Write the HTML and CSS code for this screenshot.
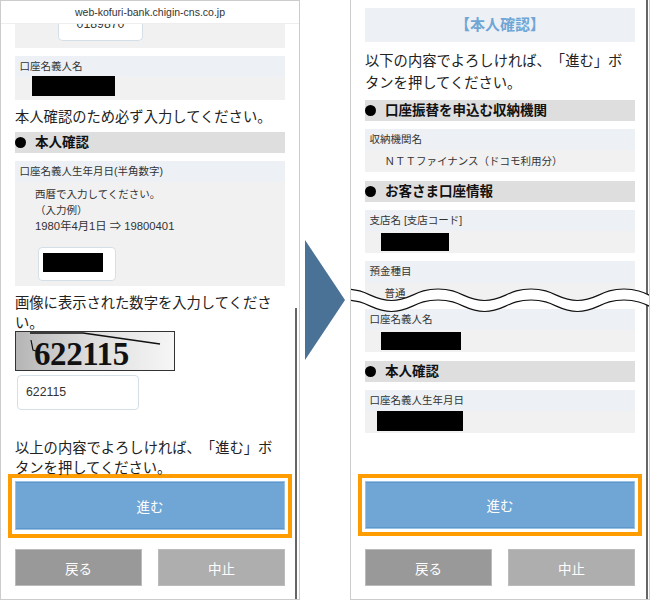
FILE: index.html
```html
<!DOCTYPE html>
<html lang="ja">
<head>
<meta charset="utf-8">
<title>本人確認</title>
<link rel="stylesheet" href="styles.css">
</head>
<body>
<main class="page">
  <section class="phone phone-left">
    <header class="addr">web-kofuri-bank.chigin-cns.co.jp</header>
    <div class="card clip-card">
      <div class="input clip-input">0189870</div>
    </div>
    <div class="card">
      <div class="card-label">口座名義人名</div>
      <div class="card-value left-name"><div class="mask mask-name"></div></div>
    </div>
    <p class="lead lead-notice">本人確認のため必ず入力してください。</p>
    <h2 class="heading">本人確認</h2>
    <div class="card card-birth">
      <div class="card-label">口座名義人生年月日(半角数字)</div>
      <div class="hint">西暦で入力してください。<br>（入力例）<br><span class="hint-example">1980年4月1日 ⇒ 19800401</span></div>
      <div class="input birth-input"><div class="mask mask-birth"></div></div>
    </div>
    <p class="lead lead-captcha">画像に表示された数字を入力してください。</p>
    <div class="captcha">
      <svg class="captcha-lines" viewBox="0 0 160 40" aria-hidden="true">
        <path d="M15 2 L68 2 L145 13" class="captcha-stroke"/>
        <path d="M16 9 L18 19 L24 21" class="captcha-stroke thin"/>
      </svg>
      <span class="captcha-text">622115</span>
    </div>
    <div class="input captcha-input">622115</div>
    <p class="lead lead-confirm">以上の内容でよろしければ、「進む」ボタンを押してください。</p>
    <div class="highlight highlight-left"><button class="btn btn-next">進む</button></div>
    <div class="btn-row">
      <button class="btn btn-back">戻る</button>
      <button class="btn btn-stop">中止</button>
    </div>
    <div class="scrollbar scrollbar-left"></div>
  </section>

  <div class="arrow-col">
    <svg class="arrow" viewBox="0 0 40 120" aria-hidden="true"><polygon points="0,0 40,60 0,120" class="arrow-fill"/></svg>
  </div>

  <section class="phone phone-right">
    <h1 class="title">【本人確認】</h1>
    <p class="lead lead-top">以下の内容でよろしければ、「進む」ボタンを押してください。</p>
    <h2 class="heading">口座振替を申込む収納機関</h2>
    <div class="card">
      <div class="card-label">収納機関名</div>
      <div class="card-value value-text">ＮＴＴファイナンス（ドコモ利用分）</div>
    </div>
    <h2 class="heading">お客さま口座情報</h2>
    <div class="card">
      <div class="card-label">支店名 [支店コード]</div>
      <div class="card-value"><div class="mask mask-branch"></div></div>
    </div>
    <div class="card card-break">
      <div class="card-label label-tall">預金種目</div>
      <div class="card-value value-text value-cut">普通</div>
    </div>
    <div class="card">
      <div class="card-label">口座名義人名</div>
      <div class="card-value"><div class="mask mask-holder"></div></div>
    </div>
    <h2 class="heading">本人確認</h2>
    <div class="card">
      <div class="card-label">口座名義人生年月日</div>
      <div class="card-value"><div class="mask mask-dob"></div></div>
    </div>
    <div class="highlight highlight-right"><button class="btn btn-next">進む</button></div>
    <div class="btn-row">
      <button class="btn btn-back">戻る</button>
      <button class="btn btn-stop">中止</button>
    </div>
    <div class="scrollbar scrollbar-right"></div>
    <svg class="wave" viewBox="0 0 300 40" aria-hidden="true">
      <path class="wave-fill" d="M-5 7 C18 7 22 18.500 41.500 18.500 C61 18.500 65 7 88 7 C111 7 115 18.500 134.500 18.500 C154 18.500 158 7 181 7 C204 7 208 18.500 227.500 18.500 C247 18.500 251 7 274 7 C297 7 301 18.500 320 18.500 L320 29.500 C301 29.500 297 18 274 18 C251 18 247 29.500 227.500 29.500 C208 29.500 204 18 181 18 C158 18 154 29.500 134.500 29.500 C115 29.500 111 18 88 18 C65 18 61 29.500 41.500 29.500 C22 29.500 18 18 -5 18 Z"/>
      <path class="wave-line" d="M-5 7 C18 7 22 18.500 41.500 18.500 C61 18.500 65 7 88 7 C111 7 115 18.500 134.500 18.500 C154 18.500 158 7 181 7 C204 7 208 18.500 227.500 18.500 C247 18.500 251 7 274 7 C297 7 301 18.500 320 18.500"/>
      <path class="wave-line" d="M-5 18 C18 18 22 29.500 41.500 29.500 C61 29.500 65 18 88 18 C111 18 115 29.500 134.500 29.500 C154 29.500 158 18 181 18 C204 18 208 29.500 227.500 29.500 C247 29.500 251 18 274 18 C297 18 301 29.500 320 29.500"/>
    </svg>
  </section>
</main>
</body>
</html>
```

FILE: styles.css
```css
* { box-sizing: border-box; }

html, body { margin: 0; padding: 0; background: #fff; }

body {
  font-family: "Liberation Sans", "Noto Sans CJK JP", sans-serif;
  color: #222;
  text-spacing-trim: space-all;
}

.page {
  display: flex;
  width: 650px;
  height: 600px;
  overflow: hidden;
}

.phone {
  position: relative;
  flex: 0 0 300px;
  height: 600px;
  padding: 0 14px;
  border: 1px solid #ccc;
  overflow: hidden;
}

.phone-right { border-top: 0; }

.arrow-col {
  flex: 0 0 50px;
  display: flex;
  align-items: center;
  padding-left: 5px;
}

.arrow { display: block; width: 40px; height: 120px; }
.arrow-fill { fill: #4a7196; }

.addr {
  height: 23px;
  margin: 0 -14px;
  border-bottom: 1px solid #eee;
  font-size: 10.5px;
  line-height: 22px;
  text-align: center;
  color: #333;
}

.title {
  height: 34px;
  margin: 8px 0 0;
  background: #edf1f5;
  font-size: 15px;
  font-weight: bold;
  line-height: 34px;
  text-align: center;
  color: #6fa6d6;
}

.card {
  margin-bottom: 8px;
  background: #f1f1f1;
}

.card-label {
  height: 21px;
  padding-left: 4.5px;
  background: #edf1f5;
  font-size: 10.5px;
  line-height: 21px;
  color: #333;
}

.label-tall { height: 22px; }

.card-value {
  height: 22px;
  padding-left: 16px;
  padding-top: 2px;
}

.value-text {
  padding-left: 19.5px;
  padding-top: 0;
  font-size: 10.5px;
  line-height: 22px;
  color: #333;
}

.card-break { height: 40px; }
.value-cut { height: 18px; line-height: 20px; }

.left-name { display: flow-root; height: 23px; padding-top: 0; padding-left: 17px; }

.mask { background: #000; }
.mask-name { width: 83px; height: 20px; margin-top: -1px; }
.mask-birth { width: 60px; height: 19px; }
.mask-branch { width: 68px; height: 18px; }
.mask-holder { width: 80px; height: 18px; }
.mask-dob { width: 86px; height: 20px; margin-left: -4px; margin-top: -2px; }

.input {
  background: #fff;
  border: 1px solid #d5dfe8;
  border-radius: 4px;
  font-size: 12.3px;
  color: #333;
}

.clip-card {
  height: 24px;
  margin-bottom: 8px;
  overflow: hidden;
  padding-left: 43px;
}

.clip-input {
  width: 85px;
  height: 17px;
  border-top: 0;
  border-radius: 0 0 5px 5px;
  overflow: hidden;
  text-align: center;
  line-height: 0;
}

.lead {
  margin: 0;
  font-size: 14.3px;
  line-height: 20px;
  color: #222;
}

.lead-notice { margin: -1px 0 5px; }
.lead-captcha { margin-top: 7px; }
.lead-confirm { margin-top: 28px; }
.lead-top { margin: 8px 0 6px; line-height: 22px; }

.heading {
  position: relative;
  height: 21px;
  margin: 0 0 8px;
  padding-left: 20px;
  background: #dedede;
  font-size: 13.5px;
  font-weight: bold;
  line-height: 21px;
  color: #111;
}

.card + .heading { margin-top: 9px; }

.heading::before {
  content: "";
  position: absolute;
  left: 0;
  top: 5px;
  width: 11px;
  height: 11px;
  border-radius: 50%;
  background: #000;
}

.card-birth { height: 125px; margin-bottom: 0; }

.hint {
  padding: 4px 0 0 20px;
  font-size: 10.5px;
  line-height: 16px;
  color: #333;
}

.hint-example { font-size: 11.3px; }

.birth-input {
  width: 78px;
  height: 34px;
  margin: 13px 0 0 23px;
  padding: 5px 0 0 4px;
}

.captcha {
  position: relative;
  width: 160px;
  height: 40px;
  margin-top: -2px;
  border: 1px solid #333;
  background: linear-gradient(90deg, #b5b5b5, #dcdcdc 45%, #f6f6f6);
  overflow: hidden;
}

.captcha-lines {
  position: absolute;
  left: -1px;
  top: -1px;
  width: 160px;
  height: 40px;
}

.captcha-stroke { fill: none; stroke: #111; stroke-width: 1.500; }
.captcha-stroke.thin { stroke-width: 1.200; }

.captcha-text {
  display: block;
  padding-left: 18px;
  font-family: "Liberation Serif", serif;
  font-size: 33px;
  font-weight: bold;
  line-height: 44px;
  letter-spacing: -0.4px;
  color: #111;
}

.captcha-input {
  width: 122px;
  height: 35px;
  margin: 4px 0 0 2px;
  padding-left: 8px;
  line-height: 33px;
}

.highlight {
  margin: 0 -7px;
  padding: 3px;
  border: 4px solid #ff9d00;
}

.highlight-left { margin-top: -4px; height: 64px; }
.highlight-right { margin-top: 41px; height: 62px; }

.btn {
  display: block;
  width: 100%;
  padding: 0;
  border: 1px solid #bbb;
  border-radius: 0;
  font-family: inherit;
  font-size: 13.5px;
  color: #fff;
}

.btn-next {
  height: 49px;
  border-color: #9cc2e3;
  background: #6fa6d6;
  box-shadow: inset 0 1px 0 #5d97cc, inset 0 -1px 0 #5d97cc;
}

.highlight-right .btn-next { height: 48px; }

.btn-row {
  display: grid;
  grid-template-columns: 127px 127px;
  justify-content: space-between;
  margin-top: 11px;
}

.highlight-right + .btn-row { margin-top: 13px; }

.btn-row .btn { height: 37px; }
.btn-back { background: #999; }
.btn-stop { background: #aeaeae; }

.scrollbar {
  position: absolute;
  width: 2px;
  background: #666;
}

.scrollbar-left { right: 2px; top: 307px; bottom: 0; }
.scrollbar-right { right: 1px; top: 0; bottom: 0; }

.wave {
  position: absolute;
  left: -1px;
  top: 282px;
  width: 300px;
  height: 40px;
}

.wave-fill { fill: #fff; stroke: none; }
.wave-line { fill: none; stroke: #111; stroke-width: 1.200; }
```
